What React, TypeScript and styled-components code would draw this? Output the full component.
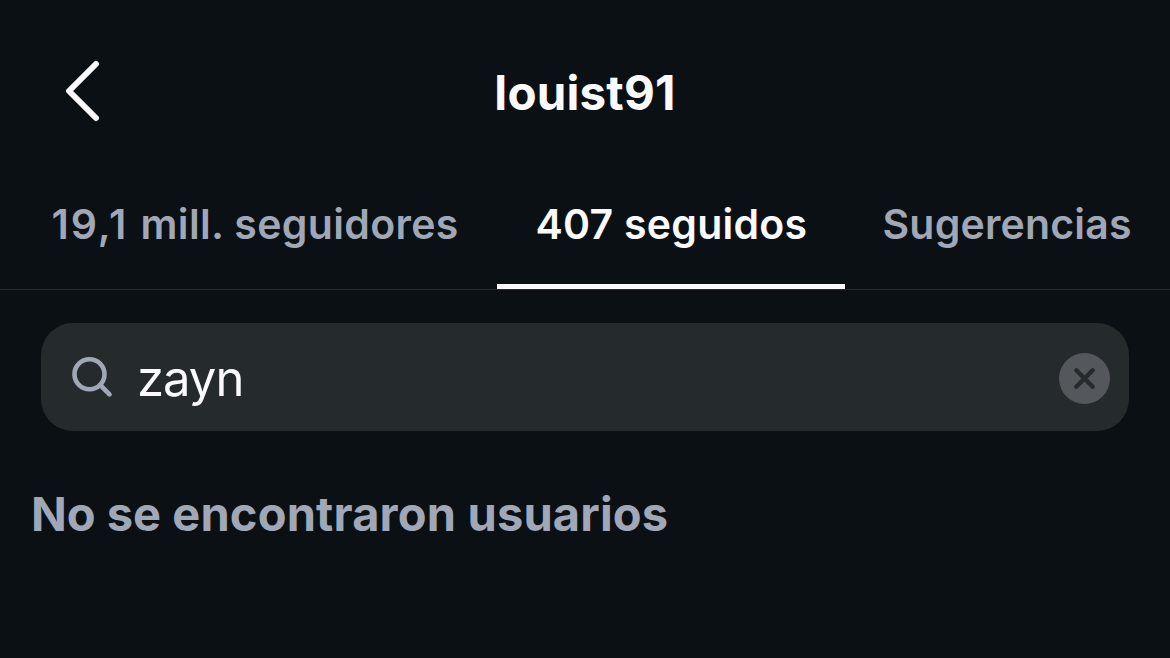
import React from "react";
import styled, { createGlobalStyle } from "styled-components";

const GlobalStyle = createGlobalStyle`
  * { box-sizing: border-box; }
  body { margin: 0; background: #0b1014; font-family: Inter, "Liberation Sans", sans-serif; }
`;

const Screen = styled.main`
  display: flex;
  flex-direction: column;
  width: 1170px;
  height: 658px;
  overflow: hidden;
  background: #0b1014;
`;

const Header = styled.header`
  display: grid;
  grid-template-columns: 100px 1fr 100px;
  align-items: center;
  height: 184px;
`;

const BackButton = styled.button`
  display: flex;
  justify-content: flex-end;
  padding: 0 0 2px;
  border: 0;
  background: none;
`;

const Title = styled.h1`
  margin: 0;
  padding-top: 2px;
  color: #fafafc;
  font-size: 47.5px;
  font-weight: 700;
  line-height: 60px;
  text-align: center;
  white-space: nowrap;
`;

const Tabs = styled.nav`
  display: flex;
  height: 106px;
  border-bottom: 1px solid #252a2e;
`;

const Tab = styled.button<{ $active?: boolean; $width: number; $pad: number }>`
  flex: none;
  width: ${(p) => p.$width}px;
  height: 105px;
  padding: 0 0 20px ${(p) => p.$pad}px;
  border: 0;
  border-bottom: 5px solid ${(p) => (p.$active ? "#fafafc" : "transparent")};
  background: none;
  color: ${(p) => (p.$active ? "#fafafc" : "#a0a7b6")};
  font: 600 41px/50px Inter, "Liberation Sans", sans-serif;
  text-align: left;
  white-space: nowrap;
`;

const Label = styled.span<{ $spacing?: number }>`
  letter-spacing: ${(p) => p.$spacing ?? 0}px;
`;

const SearchField = styled.label`
  display: flex;
  align-items: center;
  height: 108px;
  margin: 33px 41px 0;
  padding: 0 19px 0 30px;
  border-radius: 32px;
  background: #252a2d;
`;

const Query = styled.span`
  flex: 1;
  margin-left: 24px;
  padding-top: 4px;
  color: #fafafc;
  font-size: 49px;
  line-height: 60px;
`;

const ClearButton = styled.button`
  display: flex;
  padding: 2px 0 0;
  border: 0;
  background: none;
`;

const Empty = styled.p`
  margin: 53px 0 0 31px;
  color: #a0a7b6;
  font-size: 47px;
  font-weight: 700;
  line-height: 60px;
  white-space: nowrap;
`;

export default function App() {
  return (
    <Screen>
      <GlobalStyle />
      <Header>
        <BackButton aria-label="Atrás">
          <svg width="36" height="62" viewBox="0 0 36 62" fill="none">
            <path d="M32 4 L5 31 L32 58" stroke="#fafafc" strokeWidth="6" strokeLinecap="round" strokeLinejoin="round" />
          </svg>
        </BackButton>
        <Title><Label $spacing={0.2}>louist91</Label></Title>
      </Header>
      <Tabs>
        <Tab $width={497} $pad={51.5}>
          <Label $spacing={1.9}>19,1 </Label>
          <Label $spacing={0.35}>mill. seguidores</Label>
        </Tab>
        <Tab $active $width={348} $pad={38.5}><Label $spacing={0.25}>407 seguidos</Label></Tab>
        <Tab $width={325} $pad={37.5}><Label $spacing={0.2}>Sugerencias</Label></Tab>
      </Tabs>
      <SearchField>
        <svg width="42" height="42" viewBox="0 0 42 42" fill="none" stroke="#a0a7b6" strokeWidth="4.6" strokeLinecap="round">
          <circle cx="18.5" cy="18.3" r="15" />
          <path d="M29.2 29 L38.5 38.3" />
        </svg>
        <Query><Label $spacing={-1}>zayn</Label></Query>
        <ClearButton aria-label="Borrar">
          <svg width="51" height="51" viewBox="0 0 51 51">
            <circle cx="25.5" cy="25.5" r="25.5" fill="#54575c" />
            <path d="M17.3 17.3 L33.7 33.7 M33.7 17.3 L17.3 33.7" stroke="#252a2d" strokeWidth="4.4" strokeLinecap="round" />
          </svg>
        </ClearButton>
      </SearchField>
      <Empty>
        <Label $spacing={0}>No se </Label>
        <Label $spacing={0.17}>encontraron usuarios</Label>
      </Empty>
    </Screen>
  );
}
